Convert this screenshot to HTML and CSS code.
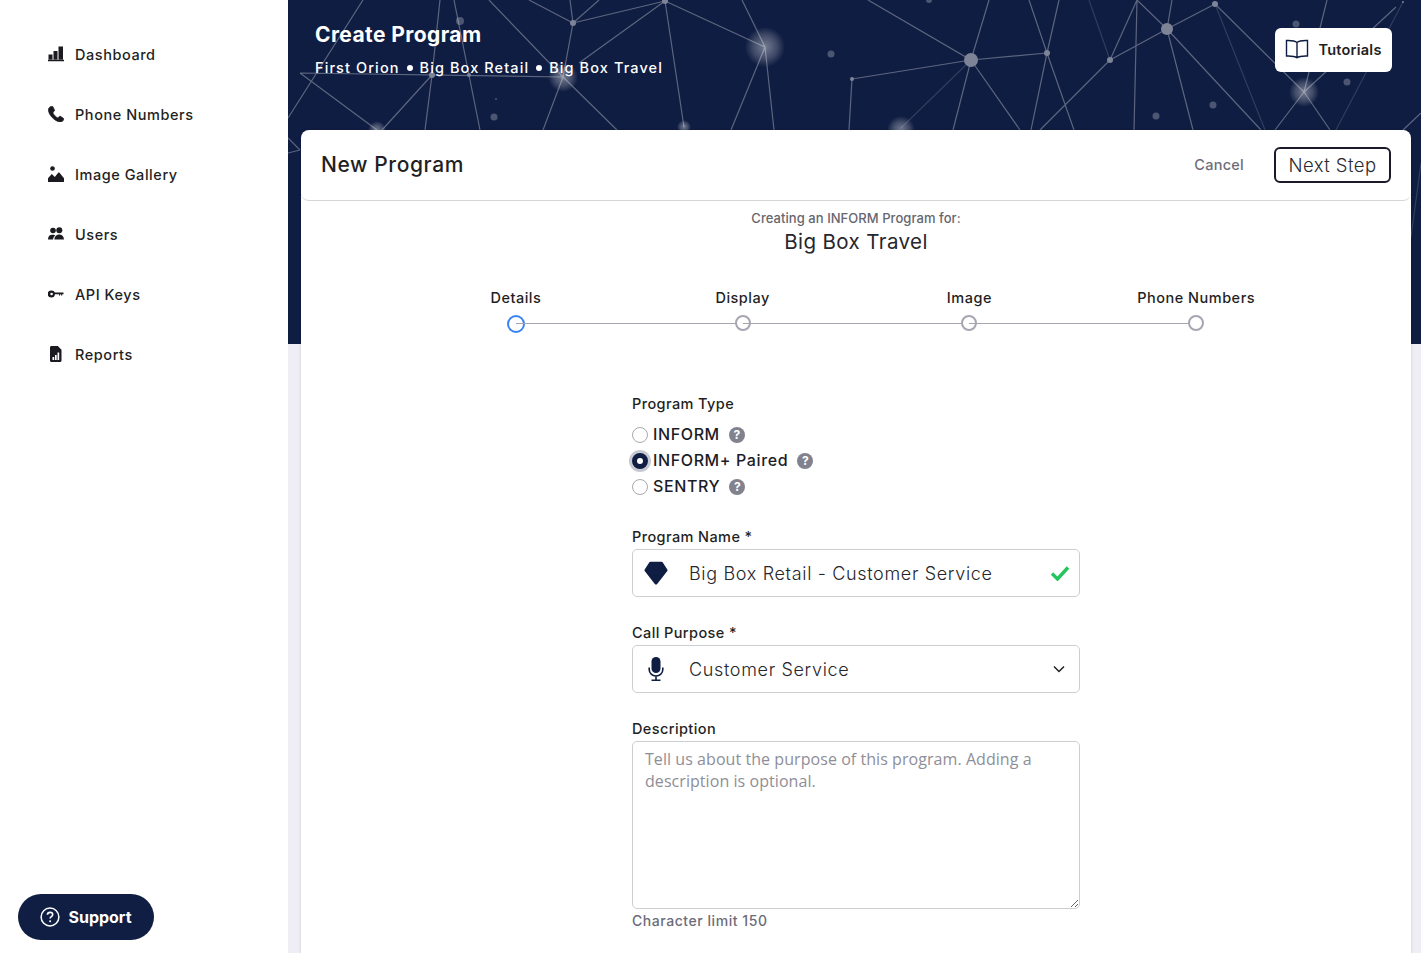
FILE: index.html
```html
<!DOCTYPE html>
<html lang="en">
<head>
  <meta charset="UTF-8">
  <meta name="viewport" content="width=device-width, initial-scale=1.0">
  <title>Create Program</title>
  <link rel="stylesheet" href="styles.css">
</head>
<body>
  <aside class="sidebar">
    <nav class="nav">
      <a class="nav-item" href="#">
        <svg class="nav-icon" viewBox="0 0 16 16"><path d="M.5 8.500h4v5h-4zM5.500 5h4v8.500h-4zM10.500.5h4.500v13h-4.500zM0 13.800h16v1.400H0z"/></svg>
        Dashboard
      </a>
      <a class="nav-item" href="#">
        <svg class="nav-icon icon-heavy" viewBox="0 0 16 16"><path d="M3.600.2C1.800.7.300 2.200.4 4c.2 2.800 1.800 5.400 3.800 7.500 2.200 2.300 4.900 4.100 7.800 4.400 1.800.2 3.300-1 3.700-2.700.1-.4 0-.7-.3-.9l-3-2c-.3-.2-.7-.2-1 .1l-1.200 1.200c-.3.3-.6.300-1 .1-1.800-1.100-3.200-2.700-4.200-4.500-.2-.4-.1-.7.200-1l1.100-1.100c.3-.3.300-.6.200-1L5 .9C4.800.3 4.200 0 3.600.2z"/></svg>
        Phone Numbers
      </a>
      <a class="nav-item" href="#">
        <svg class="nav-icon" viewBox="0 0 16 16"><circle cx="4.500" cy="2.500" r="2.300"/><path d="M0 15.500v-3.200l3.800-4.300 3 3 3.400-4.200c.4-.4 1-.4 1.300 0l4.500 5.400v3.300c0 .4-.3.600-.6.600H.6c-.4 0-.6-.2-.6-.6z"/></svg>
        Image Gallery
      </a>
      <a class="nav-item" href="#">
        <svg class="nav-icon" viewBox="0 0 16 16"><circle cx="5" cy="4.500" r="2.800"/><circle cx="11.300" cy="4.200" r="3"/><path d="M0 13.500c0-2.800 1.700-4.800 3.800-4.800h1.500c.8 0 1.500.3 2 .7C6 10.300 5.200 11.800 5 13.500zM6.300 13.500c.2-2.800 2-5 4.200-5h1.400c2.200 0 4 2.200 4.100 5z"/></svg>
        Users
      </a>
      <a class="nav-item" href="#">
        <svg class="nav-icon" viewBox="0 0 16 16"><path fill-rule="evenodd" d="M3.600 4.400a3.600 3.600 0 0 1 3.300 2.200H15.500v1.700h-1.300v1.200h-1.100V8.300h-1v1.200H11V8.300H6.900A3.600 3.600 0 1 1 3.600 4.400zm0 2.300a1.300 1.300 0 1 0 0 2.600 1.300 1.300 0 0 0 0-2.600z"/></svg>
        API Keys
      </a>
      <a class="nav-item" href="#">
        <svg class="nav-icon" viewBox="0 0 16 16"><path fill-rule="evenodd" d="M3.500 0H9.800L13.500 3.700V14.500c0 .9-.6 1.500-1.500 1.500H3.500C2.600 16 2 15.400 2 14.500V1.500C2 .6 2.600 0 3.500 0zM4.500 11v3h1.700v-3zM7 9v5h1.700V9zM9.500 6.500V14h1.700V6.500z"/></svg>
        Reports
      </a>
    </nav>
    <button class="support-btn">
      <svg class="support-icon" viewBox="0 0 20 20"><circle cx="10" cy="10" r="8.900" fill="none" stroke="#fff" stroke-width="1.500"/><path d="M7.400 7.800c.1-1.500 1.200-2.400 2.700-2.400s2.600.9 2.600 2.200c0 1-.5 1.500-1.300 2-.8.500-1.200.9-1.200 1.800" fill="none" stroke="#fff" stroke-width="1.600"/><circle cx="10.100" cy="14.200" r="1" fill="#fff"/></svg>
      Support
    </button>
  </aside>

  <main class="main">
    <header class="hero">
      <svg class="hero-bg" viewBox="288 0 1133 344">
        <defs>
          <radialGradient id="halo">
            <stop offset="0" stop-color="#fff" stop-opacity="0.42"/>
            <stop offset="0.6" stop-color="#fff" stop-opacity="0.2"/>
            <stop offset="1" stop-color="#fff" stop-opacity="0"/>
          </radialGradient>
        </defs>
        <g class="net">
          <path d="M363 0L288 118M440 0L432 75L425 130M454 0L469 75L480 130M489 0L563 77M529 0L573 23M570 0L573 23L563 77L543 130M599 0L573 23L665 1L579 63M665 1L684 127M665 1L765 47M742 0L765 47L731 130M765 47L774 130M300 73L563 77M300 73L377 130M432 75L382 130M563 77L617 130M288 138L300 150M288 153L300 150"/>
          <path d="M868 0L971 60L989 0M852 79L971 60L1047 53M852 79L849 130M971 60L953 130M971 60L1020 130M1029 0L1047 53L1074 130M1059 0L1047 53L1031 130M1137 0L1110 60M1137 0L1134 130M1137 0L1167 29M1110 60L1167 29L1215 4M1110 60L1040 130M1167 29L1172 0M1167 29L1193 130M1167 29L1261 130M1215 4L1304 92M1327 0L1304 92M1304 92L1275 130M1304 92L1330 130M1304 92L1396 7M1421 113L1403 130"/>
        </g>
        <g class="net net-faint">
          <path d="M971 60L901 128M1089 0L1110 60M1215 4L1265 130M1403 2L1336 130M1421 163L1411 237"/>
        </g>
        <g class="glow">
          <circle cx="765" cy="47" r="20"/><circle cx="563" cy="77" r="15"/><circle cx="1304" cy="92" r="15"/><circle cx="901" cy="130" r="14"/><circle cx="377" cy="130" r="9"/><circle cx="684" cy="127" r="7"/>
        </g>
        <g class="dot">
          <circle cx="971" cy="60" r="7"/><circle cx="1167" cy="29" r="6"/><circle cx="1047" cy="53" r="3"/><circle cx="1110" cy="60" r="3"/><circle cx="1215" cy="4" r="3"/><circle cx="852" cy="79" r="2"/><circle cx="573" cy="23" r="3"/><circle cx="665" cy="1" r="3"/><circle cx="432" cy="75" r="3"/><circle cx="469" cy="75" r="2"/><circle cx="1403" cy="2" r="1"/>
        </g>
        <g class="dot-faint">
          <circle cx="460" cy="21" r="4"/><circle cx="831" cy="54" r="3.500"/><circle cx="496" cy="99" r="1"/><circle cx="494" cy="117" r="3.500"/><circle cx="1296" cy="24" r="3.500"/><circle cx="1347" cy="82" r="3.500"/><circle cx="1213" cy="105" r="3.500"/><circle cx="1156" cy="116" r="3.500"/><circle cx="929" cy="0" r="3"/>
        </g>
      </svg>
      <div class="hero-text">
        <h1 class="hero-title">Create Program</h1>
        <p class="crumbs"><span>First Orion</span><span class="sep"></span><span>Big Box Retail</span><span class="sep"></span><span>Big Box Travel</span></p>
      </div>
      <button class="tutorials-btn">
        <svg class="book-icon" viewBox="0 0 24 20"><path d="M12 3.500C10 1.800 7 1.300 1.500 1.500V17c5.500-.2 8.500.2 10.500 1.800 2-1.600 5-2 10.500-1.800V1.500C17 1.300 14 1.800 12 3.500zM12 3.500V18.800"/></svg>
        Tutorials
      </button>
    </header>

    <section class="card">
      <div class="card-head">
        <h2 class="card-title">New Program</h2>
        <div class="card-actions">
          <a class="cancel" href="#">Cancel</a>
          <button class="next-btn">Next Step</button>
        </div>
      </div>

      <div class="intro">
        <p class="intro-small">Creating an INFORM Program for:</p>
        <p class="intro-name">Big Box Travel</p>
      </div>

      <ol class="stepper">
        <li class="step active"><span class="step-label">Details</span><span class="step-dot"></span></li>
        <li class="step"><span class="step-label">Display</span><span class="step-dot"></span></li>
        <li class="step"><span class="step-label">Image</span><span class="step-dot"></span></li>
        <li class="step"><span class="step-label">Phone Numbers</span><span class="step-dot"></span></li>
      </ol>

      <form class="form">
        <div class="group-type">
          <div class="label">Program Type</div>
          <label class="radio"><input type="radio" name="type"><span>INFORM</span><i class="help">?</i></label>
          <label class="radio"><input type="radio" name="type" checked><span>INFORM+ Paired</span><i class="help">?</i></label>
          <label class="radio"><input type="radio" name="type"><span>SENTRY</span><i class="help">?</i></label>
        </div>

        <div class="group">
          <label class="label" for="name">Program Name *</label>
          <div class="field">
            <svg class="field-icon" viewBox="0 0 24 24"><path d="M6.500.8h11c.6 0 1 .2 1.300.7l4.500 7c.4.600.4 1.100 0 1.600L13.200 22.900c-.7.800-1.700.8-2.400 0L.7 10.100c-.4-.5-.4-1 0-1.600l4.500-7c.3-.5.700-.7 1.300-.7z"/></svg>
            <input class="field-input" id="name" value="Big Box Retail - Customer Service">
            <svg class="check" viewBox="0 0 20 16"><path d="M2 8.500l5.500 5.500L18 2.500"/></svg>
          </div>
        </div>

        <div class="group">
          <label class="label" for="purpose">Call Purpose *</label>
          <div class="field">
            <svg class="field-icon" viewBox="0 0 24 24"><rect x="7.500" y="0" width="9" height="16" rx="4.500"/><path class="mic-stand" d="M5.200 10.500v2c0 3.800 3 6.500 6.800 6.500s6.800-2.700 6.800-6.500v-2M12 19v4M7.500 23.300h9"/></svg>
            <select class="field-input field-select" id="purpose">
              <option>Customer Service</option>
            </select>
            <svg class="chevron" viewBox="0 0 12 8"><path d="M1 1.500l5 5 5-5"/></svg>
          </div>
        </div>

        <div class="group">
          <label class="label" for="desc">Description</label>
          <textarea class="textarea" id="desc" placeholder="Tell us about the purpose of this program. Adding a description is optional."></textarea>
          <div class="hint">Character limit 150</div>
        </div>
      </form>
    </section>
  </main>
</body>
</html>
```

FILE: styles.css
```css
* {
  box-sizing: border-box;
}
html, body {
  height: 100%;
}
body {
  margin: 0;
  display: flex;
  overflow: hidden;
  font-family: Inter, 'Noto Sans', Arial, sans-serif;
  color: #1f1f24;
  background: #fff;
}
button {
  font-family: inherit;
  cursor: pointer;
}

/* sidebar */
.sidebar {
  width: 288px;
  flex: none;
  display: flex;
  flex-direction: column;
  padding-top: 25px;
}
.nav {
  flex: 1;
}
.nav-item {
  height: 60px;
  display: flex;
  align-items: center;
  gap: 11px;
  padding: 0 0 2px 48px;
  font-size: 14.5px;
  font-weight: 500;
  letter-spacing: 0.55px;
  color: #1f1f24;
  text-decoration: none;
}
.nav-icon {
  width: 16px;
  height: 16px;
  flex: none;
  fill: #1a1a20;
}
.icon-heavy {
  stroke: #1a1a20;
  stroke-width: 0.7;
}
.support-btn {
  align-self: flex-start;
  width: 136px;
  height: 46px;
  margin: 0 0 13px 18px;
  display: flex;
  align-items: center;
  justify-content: center;
  gap: 8px;
  border: none;
  border-radius: 23px;
  background: #101e43;
  color: #fff;
  font-size: 16px;
  font-weight: 700;
}
.support-icon {
  width: 20px;
  height: 20px;
}

/* header band */
.main {
  flex: 1;
  min-width: 0;
  background: #eeeef4;
  overflow: hidden;
}
.hero {
  position: relative;
  height: 344px;
  display: flex;
  justify-content: space-between;
  align-items: flex-start;
  padding: 22px 29px 0 27px;
  background: #101d42;
}
.hero-bg {
  position: absolute;
  left: 0;
  top: 0;
  width: 100%;
  height: 100%;
}
.net path {
  fill: none;
  stroke: #fff;
  stroke-opacity: 0.32;
  stroke-width: 1.200;
}
.net-faint path {
  stroke-opacity: 0.14;
}
.glow circle {
  fill: url(#halo);
}
.dot circle {
  fill: #7e8498;
}
.dot-faint circle {
  fill: #fff;
  fill-opacity: 0.25;
}
.hero-text {
  position: relative;
  color: #fff;
}
.hero-title {
  margin: 0;
  font-size: 21px;
  line-height: 26px;
  font-weight: 700;
  letter-spacing: 0.4px;
}
.crumbs {
  margin: 10px 0 0;
  display: flex;
  align-items: center;
  gap: 7px;
  font-size: 14.5px;
  line-height: 20px;
  font-weight: 500;
  letter-spacing: 1.1px;
}
.sep {
  width: 6px;
  height: 6px;
  border-radius: 50%;
  background: #fff;
}
.tutorials-btn {
  position: relative;
  width: 117px;
  height: 44px;
  margin-top: 6px;
  padding: 0 0 2px;
  display: flex;
  align-items: center;
  justify-content: center;
  gap: 9px;
  border: none;
  border-radius: 6px;
  background: #fff;
  color: #1f1f24;
  font-size: 14.5px;
  font-weight: 600;
  letter-spacing: 0.25px;
}
.book-icon {
  width: 24px;
  height: 20px;
  fill: none;
  stroke: #101d42;
  stroke-width: 1.400;
}

/* card */
.card {
  position: relative;
  margin: -214px 10px 0 13px;
  height: 900px;
  border-radius: 8px 8px 0 0;
  background: #fff;
  box-shadow: 0 0 3px rgba(0, 0, 0, 0.15);
}
.card-head {
  height: 71px;
  display: flex;
  justify-content: space-between;
  align-items: center;
  padding: 0 20px;
  border-bottom: 1px solid #d6d6d8;
  border-radius: 0 0 8px 8px;
}
.card-title {
  margin: 0 0 1px;
  font-size: 21px;
  font-weight: 500;
  letter-spacing: 0.6px;
}
.card-actions {
  display: flex;
  align-items: center;
  gap: 30px;
}
.cancel {
  margin-bottom: 2px;
  font-size: 14.5px;
  font-weight: 500;
  letter-spacing: 0.25px;
  color: #6c6c78;
  text-decoration: none;
}
.next-btn {
  width: 117px;
  height: 36px;
  padding: 0 0 1px;
  border: 2px solid #1a1a2a;
  border-radius: 6px;
  background: #fff;
  color: #2a2a30;
  font-size: 18.500px;
  font-weight: 300;
  letter-spacing: 0.45px;
}
.intro {
  text-align: center;
}
.intro-small {
  margin: 9px 0 0;
  font-size: 13px;
  line-height: 16px;
  font-weight: 500;
  letter-spacing: 0.05px;
  color: #66666e;
}
.intro-name {
  margin: 3px 0 0;
  font-size: 20.5px;
  line-height: 26px;
  font-weight: 400;
  letter-spacing: 0.4px;
  color: #26262c;
}

/* steps */
.stepper {
  width: 907px;
  margin: 34px auto 0;
  padding: 0;
  list-style: none;
  display: grid;
  grid-template-columns: repeat(4, 1fr);
}
.step {
  position: relative;
  display: flex;
  flex-direction: column;
  align-items: center;
  gap: 8px;
}
.step + .step::before {
  content: "";
  position: absolute;
  right: 50%;
  width: 100%;
  bottom: 8px;
  height: 1px;
  background: #a6a6b2;
}
.step-label {
  font-size: 14.5px;
  line-height: 18px;
  font-weight: 500;
  letter-spacing: 0.5px;
  white-space: nowrap;
}
.step-dot {
  position: relative;
  width: 16px;
  height: 16px;
  border: 2px solid #a6a6b2;
  border-radius: 50%;
  background: #fff;
}
.step.active .step-dot {
  width: 18px;
  height: 18px;
  margin-bottom: -1px;
  border-color: #3b82f6;
}

/* form */
.form {
  width: 448px;
  margin: 63px auto 0;
}
.label {
  display: block;
  font-size: 14.5px;
  line-height: 18px;
  font-weight: 500;
  letter-spacing: 0.4px;
}
.group-type .label {
  margin-bottom: 9px;
}
.radio {
  height: 26px;
  display: flex;
  align-items: center;
  font-size: 16px;
  font-weight: 500;
  letter-spacing: 0.62px;
  color: #1c1c28;
}
.radio span {
  margin-top: -2px;
}
.radio input {
  appearance: none;
  width: 16px;
  height: 16px;
  margin: 0 5px 0 0;
  border: 1px solid #a9a9b0;
  border-radius: 50%;
  background: #fff;
}
.radio input:checked {
  border: 5px solid #101d42;
  box-shadow: 0 0 0 3px #c6c9d2;
}
.help {
  width: 16px;
  height: 16px;
  margin-left: 9px;
  border-radius: 50%;
  background: #82828f;
  color: #fff;
  font-size: 12px;
  line-height: 16px;
  font-weight: 700;
  font-style: normal;
  letter-spacing: 0;
  text-align: center;
}
.group {
  margin-top: 27px;
}
.group .label {
  margin-bottom: 3px;
}
.group-type + .group {
  margin-top: 28px;
}
.field {
  height: 48px;
  display: flex;
  align-items: center;
  padding: 0 11px;
  border: 1px solid #cdcdd2;
  border-radius: 5px;
}
.field-icon {
  width: 24px;
  height: 24px;
  flex: none;
  fill: #101d42;
}
.mic-stand {
  fill: none;
  stroke: #101d42;
  stroke-width: 1.600;
}
.field-input {
  flex: 1;
  min-width: 0;
  height: 100%;
  margin-left: 21px;
  padding: 0;
  border: none;
  outline: none;
  background: none;
  font-family: inherit;
  font-size: 18px;
  font-weight: 300;
  letter-spacing: 0.66px;
  color: #26262c;
}
.field-select {
  appearance: none;
}
.check {
  width: 20px;
  height: 16px;
  flex: none;
  margin-right: -2px;
  fill: none;
  stroke: #22c55e;
  stroke-width: 3.400;
}
.chevron {
  width: 12px;
  height: 8px;
  flex: none;
  margin-right: 3px;
  fill: none;
  stroke: #1f1f24;
  stroke-width: 1.500;
}
.textarea {
  display: block;
  width: 100%;
  height: 168px;
  padding: 6px 12px;
  border: 1px solid #cdcdd2;
  border-radius: 5px;
  outline: none;
  font-family: 'Open Sans', 'Noto Sans', sans-serif;
  font-size: 16px;
  line-height: 22px;
  letter-spacing: 0.06px;
}
.textarea::placeholder {
  color: #8e8e98;
  opacity: 1;
}
.hint {
  margin-top: 3px;
  font-size: 14px;
  line-height: 18px;
  font-weight: 500;
  letter-spacing: 0.55px;
  color: #6c6c78;
}
```
